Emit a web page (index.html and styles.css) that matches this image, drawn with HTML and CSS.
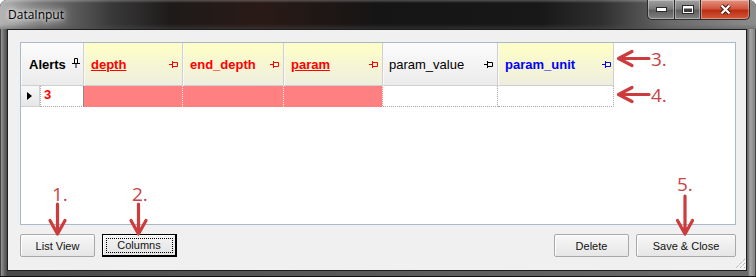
FILE: index.html
```html
<!DOCTYPE html>
<html lang="en">
<head>
    <meta charset="UTF-8">
    <title>DataInput</title>
    <link rel="stylesheet" href="styles.css">
</head>
<body>
    <div class="window">
        <!-- Title bar -->
        <div class="titlebar">
            <span class="title">DataInput</span>
            <div class="caption">
                <div class="cap cap-min">
                    <svg width="11" height="5" viewBox="0 0 11 5"><rect x="0.5" y="0.5" width="10" height="4" fill="#fff" stroke="#2a2a2a"/></svg>
                </div>
                <div class="cap cap-max">
                    <svg width="12" height="9" viewBox="0 0 12 9"><rect x="0.5" y="0.5" width="11" height="8" fill="#3a3a3a" stroke="#2a2a2a"/><rect x="1.5" y="1.5" width="9" height="6" fill="none" stroke="#fff"/><rect x="1.5" y="1.5" width="9" height="2" fill="#fff"/></svg>
                </div>
                <div class="cap cap-close">
                    <svg width="13" height="11" viewBox="0 0 13 11"><path d="M2.5 1.5 L10.5 9.5 M10.5 1.5 L2.5 9.5" stroke="#4a1a10" stroke-width="4.2" fill="none"/><path d="M2.5 1.5 L10.5 9.5 M10.5 1.5 L2.5 9.5" stroke="#fff" stroke-width="2.2" fill="none"/></svg>
                </div>
            </div>
        </div>

        <div class="frame">
            <div class="client">
                <!-- Grid -->
                <div class="grid">
                    <div class="row header">
                        <div class="hcell plain w-alerts">
                            <span>Alerts</span>
                            <svg class="pin-v" width="8" height="10" viewBox="0 0 8 10"><path d="M2.5 0.5H5.5V5.5H2.5Z M0 5.5H8 M4 5.5V10" fill="none" stroke="#000"/></svg>
                        </div>
                        <div class="hcell yellow w-depth red">
                            <span class="u">depth</span>
                            <svg width="9" height="7" viewBox="0 0 9 7"><path d="M0 3.5H3 M3.5 0V7 M3.5 1.5H8.5V5.5H3.5" fill="none" stroke="#f00"/></svg>
                        </div>
                        <div class="hcell yellow w-end red">
                            <span>end_depth</span>
                            <svg width="9" height="7" viewBox="0 0 9 7"><path d="M0 3.5H3 M3.5 0V7 M3.5 1.5H8.5V5.5H3.5" fill="none" stroke="#f00"/></svg>
                        </div>
                        <div class="hcell yellow w-param red">
                            <span class="u">param</span>
                            <svg width="9" height="7" viewBox="0 0 9 7"><path d="M0 3.5H3 M3.5 0V7 M3.5 1.5H8.5V5.5H3.5" fill="none" stroke="#f00"/></svg>
                        </div>
                        <div class="hcell plain w-value normal">
                            <span>param_value</span>
                            <svg width="9" height="7" viewBox="0 0 9 7"><path d="M0 3.5H3 M3.5 0V7 M3.5 1.5H8.5V5.5H3.5" fill="none" stroke="#000"/></svg>
                        </div>
                        <div class="hcell yellow w-unit blue">
                            <span>param_unit</span>
                            <svg width="9" height="7" viewBox="0 0 9 7"><path d="M0 3.5H3 M3.5 0V7 M3.5 1.5H8.5V5.5H3.5" fill="none" stroke="#00f"/></svg>
                        </div>
                    </div>
                    <div class="row data">
                        <div class="selector"><span class="arrow"></span></div>
                        <div class="dcell w-id id">3</div>
                        <div class="dcell pink w-depth"></div>
                        <div class="dcell pink w-end"></div>
                        <div class="dcell pink w-param"></div>
                        <div class="dcell w-value"></div>
                        <div class="dcell w-unit"></div>
                    </div>
                </div>

                <!-- Buttons -->
                <div class="buttons">
                    <button class="btn">List View</button>
                    <button class="btn focused">Columns</button>
                    <span class="spacer"></span>
                    <button class="btn">Delete</button>
                    <button class="btn wide">Save &amp; Close</button>
                </div>

                <svg class="grip" width="12" height="12" viewBox="0 0 12 12">
                    <path d="M11 2 L2 11 M11 6 L6 11 M11 10 L10 11" stroke="#9a9a9a" stroke-width="1" stroke-dasharray="1 1" fill="none"/>
                    <path d="M12 3 L3 12 M12 7 L7 12" stroke="#fff" stroke-width="1" stroke-dasharray="1 1" fill="none"/>
                </svg>
            </div>
        </div>

        <!-- Annotations -->
        <svg class="notes" width="756" height="277" viewBox="0 0 756 277">
            <g stroke="#cd3c3c" stroke-width="3.2" fill="none" stroke-linecap="round" stroke-linejoin="round">
                <path d="M649 58.5H620 M632 51.5 L618.5 58.5 L632 65.5"/>
                <path d="M649 94.5H620 M632 87.5 L618.5 94.5 L632 101.5"/>
                <path d="M57.5 204V232 M50 220.5 L57.5 234 L65 220.5"/>
                <path d="M138.5 204V232 M131 220.5 L138.5 234 L146 220.5"/>
                <path d="M685 196V232 M677.5 220.5 L685 234 L692.5 220.5"/>
            </g>
            <g class="num">
                <text x="651" y="65.5">3.</text>
                <text x="651" y="102">4.</text>
                <text x="52" y="200.5">1.</text>
                <text x="132" y="200.5">2.</text>
                <text x="677" y="190.5">5.</text>
            </g>
        </svg>
    </div>
</body>
</html>
```

FILE: styles.css
```css
body {
    margin: 0;
    padding: 0;
    background: #fff;
}
.window {
    position: relative;
    width: 756px;
    height: 277px;
    display: flex;
    flex-direction: column;
    box-sizing: border-box;
    background: linear-gradient(to right, #a4a4a4 0, #6c6c6c 4px, #4a4a4a 7px, #6a6a6a 748px, #a8a8a8 750px, #7c7c7c 756px);
    border-radius: 7px 7px 0 0;
    box-shadow: inset 0 -1px 0 #111, inset 1px 0 0 #444, inset -1px 0 0 #444;
    overflow: hidden;
}
.titlebar {
    height: 29px;
    display: flex;
    justify-content: space-between;
    align-items: flex-start;
    background:
        linear-gradient(to bottom, rgba(255, 255, 255, 0.25) 0, rgba(255, 255, 255, 0) 3px, rgba(0, 0, 0, 0) 24px, rgba(80, 80, 80, 0.4) 29px),
        linear-gradient(to right, #b4b4b4 0, #7a7a7a 40px, #3a3a3a 110px, #1e1a1a 170px, #2a1a16 260px, #151515 380px, #181818 540px, #2e2e2e 600px, #6a6a6a 670px, #8c8c8c 756px);
}
.title {
    font-family: "Open Sans", "Noto Sans", sans-serif;
    font-size: 12px;
    color: #000;
    margin: 6px 0 0 8px;
    text-shadow: 0 0 4px #fff, 0 0 8px #fff, 0 0 12px rgba(255, 255, 255, 0.8);
}
.caption {
    display: flex;
    margin-right: 6px;
}
.cap {
    height: 20px;
    box-sizing: border-box;
    border: 1px solid #2c2c2c;
    border-top: none;
    display: flex;
    align-items: center;
    justify-content: center;
    box-shadow: inset 0 0 0 1px rgba(255, 255, 255, 0.35);
}
.cap-min {
    width: 28px;
    border-bottom-left-radius: 5px;
    background: linear-gradient(#a0a0a0, #7c7c7c 45%, #5e5e5e 55%, #828282);
}
.cap-max {
    width: 26px;
    border-left: none;
    background: linear-gradient(#a0a0a0, #7c7c7c 45%, #5e5e5e 55%, #828282);
}
.cap-close {
    width: 49px;
    border-left: none;
    border-bottom-right-radius: 5px;
    background: linear-gradient(#e49484, #d2563e 45%, #bc2e14 55%, #d45a3a);
}
.frame {
    flex: 1;
    display: flex;
    padding: 0 9px 6px 7px;
}
.client {
    position: relative;
    flex: 1;
    display: flex;
    flex-direction: column;
    background: #f0f0f0;
    border: 1px solid #1e1e1e;
    padding: 12px 10px 0 12px;
}
.grid {
    height: 183px;
    box-sizing: border-box;
    border: 1px solid #a9b9c9;
    background: #fff;
}
.row {
    display: flex;
}
.header {
    height: 43px;
}
.hcell {
    box-sizing: border-box;
    height: 43px;
    display: flex;
    align-items: center;
    justify-content: space-between;
    padding: 0 4px 0 6px;
    font-family: "Liberation Sans", Arial, sans-serif;
    font-size: 13px;
    font-weight: bold;
    color: #000;
    border-left: 1px solid #fafafa;
    border-right: 1px solid #d0d0d0;
    border-bottom: 1px solid #cfcfcf;
}
.hcell.plain {
    background: linear-gradient(#fcfcfc, #ebebeb);
}
.hcell.yellow {
    background: linear-gradient(#ffffc6, #eeeee0);
}
.hcell.red {
    color: #f00;
}
.hcell.blue {
    color: #00f;
}
.hcell.normal {
    font-weight: normal;
    padding-left: 5px;
}
.hcell .u {
    text-decoration: underline;
}
.w-alerts { width: 63px; padding-left: 7px; padding-right: 3px; }
.w-depth { width: 99px; }
.w-end { width: 101px; }
.w-param { width: 99px; }
.w-value { width: 115px; }
.w-unit { width: 116px; padding-right: 2px; }
.w-id { width: 44px; }
.pin-v {
    margin-top: -3px;
}
.data {
    height: 21px;
}
.selector {
    box-sizing: border-box;
    width: 19px;
    height: 21px;
    display: flex;
    align-items: center;
    padding-left: 6px;
    background: linear-gradient(#f8f8f8, #e6e6e6);
    border-right: 1px solid #d0d0d0;
    border-bottom: 1px solid #d0d0d0;
}
.arrow {
    width: 0;
    height: 0;
    border-left: 5px solid #000;
    border-top: 4.5px solid transparent;
    border-bottom: 4.5px solid transparent;
}
.dcell {
    box-sizing: border-box;
    height: 21px;
    border-right: 1px dotted #a8a8a8;
    border-bottom: 1px dotted #a8a8a8;
}
.dcell.id {
    border-left: 1px dotted #a8a8a8;
    border-right: 1px solid #8a8a8a;
    padding-left: 3px;
    font-family: "Liberation Sans", Arial, sans-serif;
    font-size: 13px;
    font-weight: bold;
    color: #f00;
    line-height: 18px;
}
.dcell.pink {
    background: #ff8080;
    border-right: 1px dotted #f4f4f4;
    border-bottom: none;
}
.buttons {
    display: flex;
    gap: 7px;
    margin-top: 9px;
}
.spacer {
    flex: 1;
}
.btn {
    box-sizing: border-box;
    width: 75px;
    height: 23px;
    padding: 0;
    font-family: "Liberation Sans", Arial, sans-serif;
    font-size: 11px;
    color: #111;
    border: 1px solid #a8a8a8;
    border-radius: 2px;
    background: linear-gradient(#f7f7f7, #e6e6e6);
    box-shadow: inset 1px 1px 0 #fff;
}
.btn.focused {
    border: 1px solid #000;
    border-right-width: 2px;
    border-bottom-width: 2px;
    border-radius: 0;
    outline: 1px dotted #000;
    outline-offset: -5px;
    background: linear-gradient(#f4f4f4, #e4e4e4);
}
.btn.wide {
    width: 100px;
}
.grip {
    position: absolute;
    right: 0;
    bottom: 1px;
}
.notes {
    position: absolute;
    left: 0;
    top: 0;
    pointer-events: none;
}
.num text {
    font-family: "Open Sans", "Liberation Sans", sans-serif;
    font-size: 19px;
    fill: #c94444;
}
```
